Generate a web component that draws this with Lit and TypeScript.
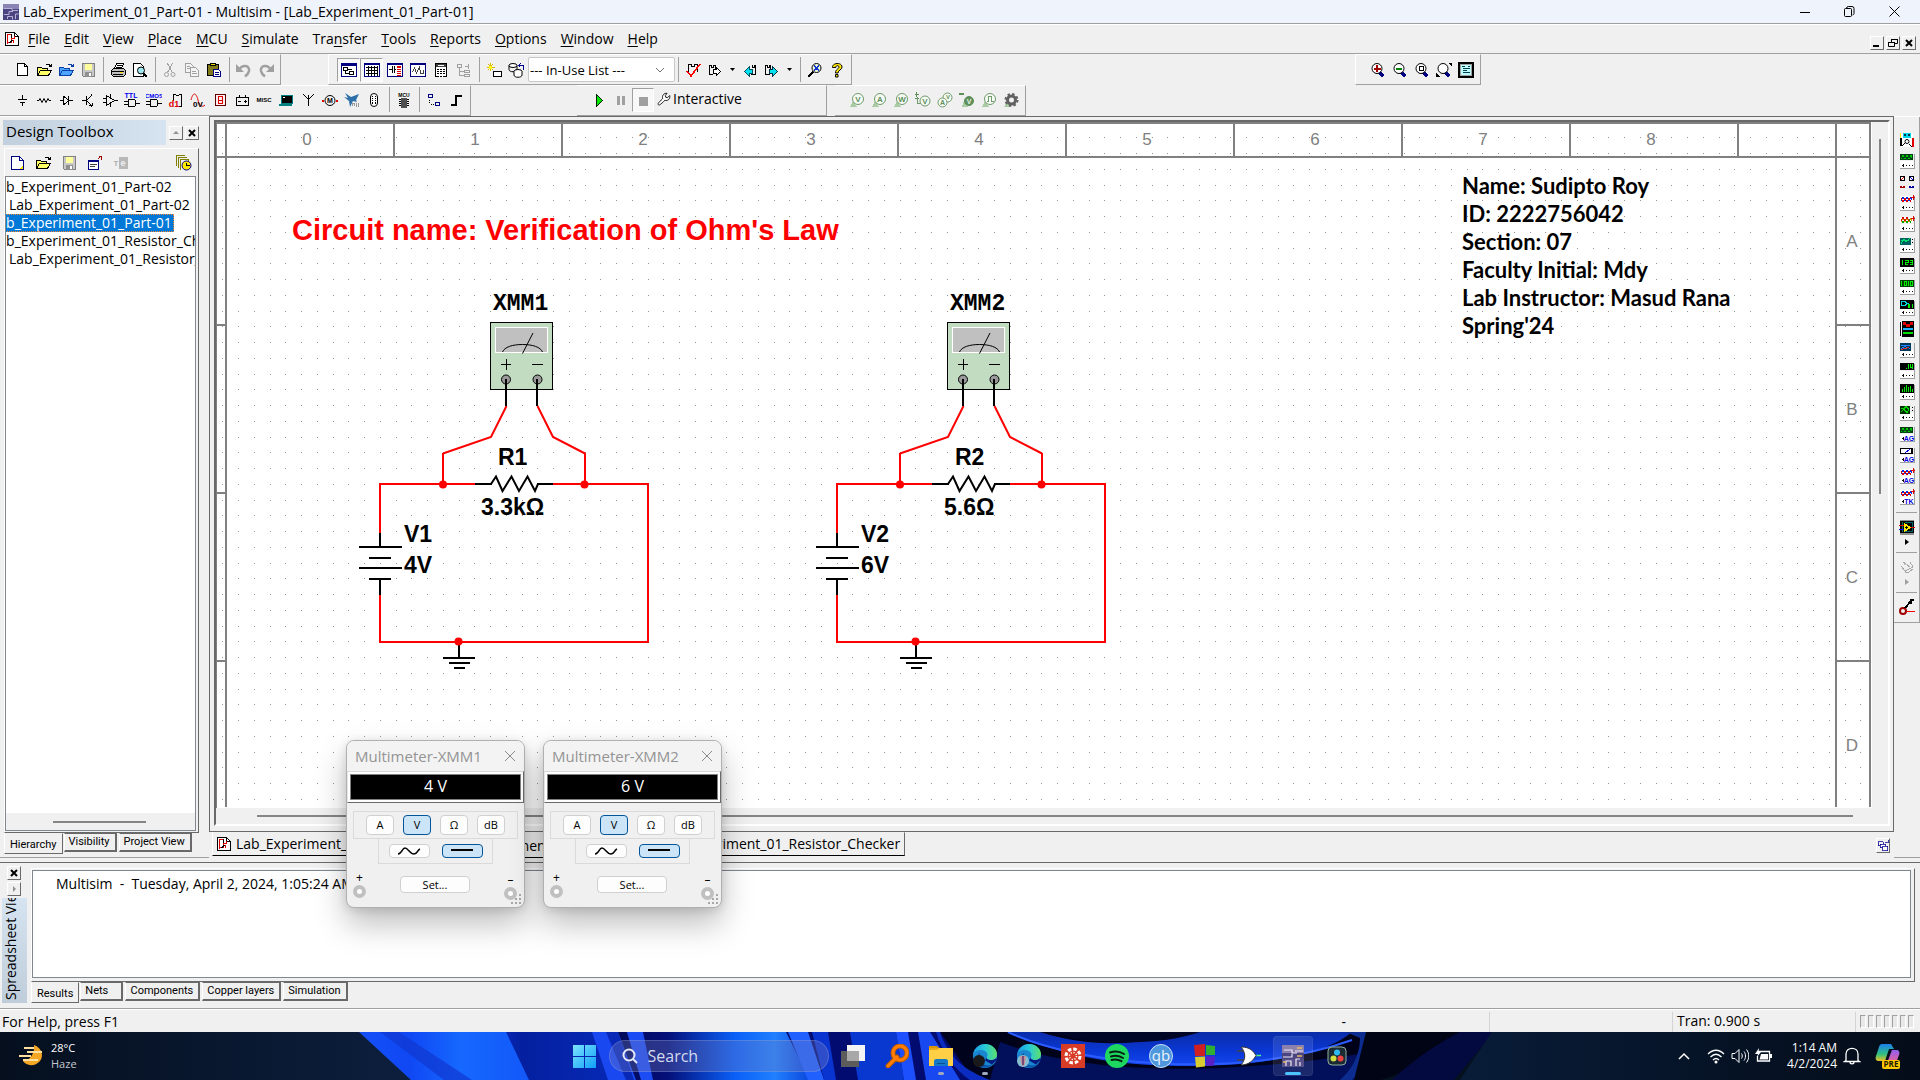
import { LitElement, html, svg, css } from "lit";
import { customElement, property, state } from "lit/decorators.js";
import { classMap } from "lit/directives/class-map.js";

/* ---------- drawing helpers ---------- */
const P = (d: string, s = "#000", f = "none", w = 1) =>
  svg`<path d=${d} stroke=${s} fill=${f} stroke-width=${w}></path>`;
const F = (d: string, f = "#000") => svg`<path d=${d} fill=${f}></path>`;
const C = (x: number, y: number, r: number, s = "#000", f = "none", w = 1) =>
  svg`<circle cx=${x} cy=${y} r=${r} stroke=${s} fill=${f} stroke-width=${w} shape-rendering="auto"></circle>`;
const T = (x: number, y: number, size: number, fill: string, t: string) =>
  svg`<text x=${x} y=${y} font-size=${size} font-weight="700" fill=${fill} text-anchor="middle" font-family="Liberation Sans, sans-serif">${t}</text>`;

const folder = (fill: string, line: string) => [
  P("M1.5 13.5v-8h4l1 1h5v2", line, fill),
  P("M1.5 13.5l3-5h11l-3 5z", line, fill),
  P("M9.5 3.5l1-1h3l1 2M12.5 4.5h2.5v-3", line),
];
const floppy = [
  P("M2.5 1.5h12v13h-11l-1-1z", "#808080", "#c8c8c8"),
  F("M5 2h7v6h-7z", "#ffff9c"),
  F("M5 10h7v5h-7z", "#909090"),
  F("M9 11h2v3h-2z", "#fff"),
];
const probe = (t: string, extra: any = null) => [
  F("M1 15h7l-4-6z", "#a9cba4"),
  C(9, 7, 5.5, "#6f9a6a", "#f6fbf6", 1),
  T(9, 10, 8, "#5f8f5a", t),
  extra,
];
const lens = (inner: any) => [
  P("M9.5 10.5l4 4", "#000080", "none", 3),
  C(7, 6.5, 5, "#000", "#fff", 1),
  inner,
];

const icons: Record<string, any> = {
  newdoc: [P("M3.5 1.5h7l3 3v9h-10z", "#000", "#fff"), P("M10.5 1.5v3h3")],
  newyellow: [P("M2.5 1.5h8l4 4v9h-12z", "#000080", "#fff"), F("M10 14h4v-4z", "#ffe400"), P("M10.5 1.5v4h4", "#000080")],
  open: folder("#ffff66", "#000"),
  openblue: folder("#4ca6ff", "#0b3fa8"),
  save: floppy,
  print: [P("M4.5 6.5l2-5h7l-2 5", "#000", "#fff"), P("M7 3.5h5M6 5.5h5"), P("M1.5 8.5l2-2h10l2 2v4l-2 2h-10l-2-2z", "#000", "#c0c0c0"), P("M2 9.5h12M3 12.5h10"), F("M10 10h3v1h-3z", "#ffe400")],
  preview: [P("M1.5 14.5v-13h7l3 3v10z", "#000", "#fff"), C(9, 8.5, 3.5, "#000", "#9fe8f0"), P("M11.5 11.5l3.5 3.5", "#000", "none", 2)],
  cut: [P("M5.5 1.5l5 9M10.5 1.5l-5 9", "#a0a0a0"), C(4.5, 12.5, 2, "#a0a0a0"), C(11, 12.5, 2, "#a0a0a0")],
  copy: [P("M1.5 1.5h5l3 3v6h-8z", "#a0a0a0", "#f4f4f4"), P("M6.5 5.5h5l3 3v6h-8z", "#a0a0a0", "#f4f4f4"), P("M8 9.5h4M8 11.5h5M3 4.5h3M3 6.5h3", "#a0a0a0")],
  paste: [P("M1.5 2.5h11v11h-11z", "#000", "#807a1c"), P("M4.5 3.5h5v-2h-5z", "#000", "#e8d800"), P("M7.5 7.5h5l2 2v5h-7z", "#000080", "#fff"), P("M9 10.5h4M9 12.5h4", "#000080")],
  undo: svg`<g shape-rendering="auto"><path d="M3 8C6 2 14 3 13 9c-.5 2.500-2 4-4 5.500" fill="none" stroke="#a0a0a0" stroke-width="2.500"></path><path d="M0 2v8h8z" fill="#a0a0a0"></path></g>`,
  redo: svg`<g shape-rendering="auto"><path d="M13 8C10 2 2 3 3 9c.5 2.500 2 4 4 5.500" fill="none" stroke="#a0a0a0" stroke-width="2.500"></path><path d="M16 2v8h-8z" fill="#a0a0a0"></path></g>`,
  toolboxview: [P("M.5 1.5h15v13h-15z", "#000080", "#fff"), F("M0 1h16v3h-16z", "#000080"), P("M2.5 5.5h4v3h-4zM8.5 9.5h4v3h-4zM4.5 9v2.5h4M7 7.5h4")],
  sheetview: [P("M.5 1.5h15v13h-15z", "#000080", "#fff"), F("M0 1h16v2h-16z", "#000080"), P("M2 5.5h12M2 8.5h12M2 11.5h12M4.5 4v10M7.5 4v10M10.5 4v10M13.5 4v10")],
  spiceview: [P("M.5 1.5h15v13h-15z", "#000080", "#fff"), F("M0 1h16v2h-16z", "#000080"), P("M2 7.5h3M7 7.5h2M5.5 4v7M7.5 4v7"), F("M10 4h4v10h-4z", "#e00000"), P("M10 6.5h4M10 8.5h4M10 10.5h4M10 12.5h4", "#fff")],
  grapher: [P("M.5 1.5h15v13h-15z", "#000080", "#fff"), F("M0 1h16v2h-16z", "#000080"), P("M2.5 10l2-4 2 5 3-6 1 6h3v-3", "#404040")],
  postproc: [P("M2.5 1.5h11v13h-11z", "#000", "#fff"), F("M3 2h10v3h-10z", "#404040"), P("M4 7.5h8M4 9.5h8M4 11.5h8", "#000", "none"), P("M6.5 6v9M9.5 6v9", "#fff"), F("M5 3h6v1h-6z", "#fff")],
  parent: [P("M1.5 2.5h4v3h-4zM8.5 8.5h5v2h-5zM8.5 12.5h5v2h-5zM3.5 6v7.5h5M3.5 9.5h5M9 4.5h4M12 2v5", "#a0a0a0")],
  wizard: [P("M7.5 9.5h8v5h-8z", "#000", "#fff"), P("M4.5 1v8M1 5.5h8M2 2l5 6M7 2l-5 6", "#d8b800"), F("M3 4h3v3h-3z", "#ff0")],
  database: [svg`<g shape-rendering="auto"><ellipse cx="5" cy="3.500" rx="4" ry="2" fill="#fff" stroke="#000"></ellipse><path d="M1 3.500v4c0 3 8 3 8 0v-4" fill="none" stroke="#000"></path><ellipse cx="10" cy="9.500" rx="4" ry="2" fill="#fff" stroke="#000"></ellipse><path d="M6 9.500v3.500c0 3 8 3 8 0v-3.500" fill="#fff" stroke="#000"></path></g>`, P("M11 3.5h4v4M12.5 1.5l-2 2 2 2", "#000090")],
  erc: [P("M3.5 11v-8.500h3v2h3v-2h3v7", "#000"), P("M2 9l4 5 9-12", "#f00", "none", 1.500)],
  fwdanno: [P("M5.5 12.5h-3v-9h2v2h2v-2h2v3", "#000"), P("M6.5 7.5h3v-2l4 4-4 4v-2h-3z", "#000", "#fff")],
  backanno: [P("M9.5 3.5h1v2h2v-2h1v9h-5", "#000"), P("M10.500 7.5h-3v-3l-5 5 5 5v-3h3z", "#005060", "#00e0f0")],
  fwdanno2: [P("M5.500 12.500h-4v-9h2v2h2v-2h1v4"), P("M5.5 7.5h3v-3l5 5-5 5v-3h-3z", "#003040", "#00e0f0")],
  find: [P("M1 15l5-5", "#000", "none", 2), C(9.5, 6, 4.5, "#000", "#e6f6d8"), P("M7 3.5l5 5M7 8.5l5-5", "#1030d0"), F("M8 5h3v3h-3z", "#1030d0")],
  help: svg`<path shape-rendering="auto" d="M3.500 5.500c-.5-5 9.500-5.500 9.500-.5 0 3-4 3-4 6H6.500c0-4 3.500-4 3.500-6 0-1.800-3.500-1.800-3.200.5zM6.500 12.500h2.500v2.500H6.500z" fill="#ffe800" stroke="#000"></path>`,
  zoomin: lens(F("M6 3h2v2.500h2.500v2h-2.500v2.500h-2v-2.500h-2.500v-2h2.500z", "#a00000")),
  zoomout: lens(F("M4 5.500h6v2h-6z", "#008000")),
  zoomarea: lens(P("M5 4.5h4v4h-4z")),
  zoomfit: [lens(null), F("M12 1h4v4zM0 11v4h4z")],
  fullscreen: [P("M1 1h14v14h-14z", "#000", "#a0a0a0", 2), F("M3 3h10v10h-10z", "#bff"), P("M4 4.5h3M5 6.5h7M5 8.5h4M5 10.5h7M10 4.5h2", "#004050")],
  source: [P("M8.5 3v4M4 7.5h9M6 10.5h5M8.5 11v3")],
  resistor: [svg`<path shape-rendering="auto" d="M1 8.500h2l1-2 2 4 2-4 2 4 2-4 1 2h2" fill="none" stroke="#000"></path>`],
  diode: [P("M2 8.5h3M11 8.5h4M5.5 4v9M10.5 4v9M5.5 4l5 4.5-5 4.5")],
  transistor: [P("M2 8.5h4M6.5 4v9M7 8l4-4M7 9l4 4M11.5 2v2M11.5 13v2M9 13h3v-2")],
  opamp: [P("M4.5 3.5v10l8-5zM1 6.5h3M1 10.5h3M12 8.5h4M8.5 2v3M8.5 12v3")],
  ttl: [T(7, 6, 7, "#0000f0", "TTL"), P("M4 7.5h5c4 0 4 7 0 7h-5zM0 9.5h4M0 12.5h4M12 11.5h4")],
  cmos: [T(8, 6, 6, "#0000f0", "CMOS"), P("M4 7.5h5c4 0 4 7 0 7h-5zM0 9.5h4M0 12.5h4M12 11.5h4")],
  miscdig: [P("M5.5 9v-6.500h2l1 1h2l1-1h2v12h-3"), T(6, 15, 9, "#e00000", "d1")],
  mixed: [svg`<path d="M1 8c2-8 5-8 7 0 1 5 4 8 7 5" fill="none" stroke="#e00000" shape-rendering="auto"></path>`, T(8, 15, 8, "#000", "0V")],
  indicator: [P("M3.5 2.5h10v11h-10z", "#600000", "#ffecec"), P("M6.5 4.5h4v7h-4zM6.5 8.5h4", "#e00000")],
  power: [P("M2.5 5.5h12v8h-12zM5.5 3v2M11.5 3v2M4 9.5h3M10 9.5h3M11.5 8v3")],
  miscpart: [T(8, 10, 6, "#000", "MISC")],
  advperiph: [P("M3.5 3.5h11v8h-11z", "#008080", "#000"), F("M5 5h2v1h-2z", "#fff"), F("M1 12h13v2h-13z", "#008080")],
  rf: [P("M3.5 2.5l5 5 5-5M8.5 3v11")],
  motor: [P("M0 8.5h2M14 8.5h2", "#e00000", "none", 2), C(8, 8.5, 5), T(8, 11, 7, "#000", "M")],
  ni: [svg`<path shape-rendering="auto" d="M1 1l6 4 8-3-3 6 1 2-4-1-3 6-1-6-5-4 4 1z" fill="#2d6fa8"></path>`, P("M8.5 14v-3h2v3M12.5 11v4M14.5 11v4", "#999")],
  connector: [svg`<rect x="4.500" y="1.500" width="7" height="13" rx="3.500" fill="#fff" stroke="#000" shape-rendering="auto"></rect>`, P("M6.5 4v8M9.5 4v8", "#000", "none"), P("M6 5.5h4M6 7.500h4M6 9.5h4", "#fff")],
  mcu: [T(8, 5, 5, "#000", "MCU"), P("M3 7.5h10M3 9.5h10M3 11.5h10M3 13.5h10"), F("M5 6h6v10h-6z", "#505050")],
  hier: [P("M2.5 2.5h4v3h-4z", "#000080"), P("M9.5 10.5h4v3h-4z", "#000080"), P("M3 8.5h1M3 10.5h1M5 12.5h1M7 12.5h1")],
  bus: [P("M3 13h5v-9h6", "#000", "none", 2)],
  play: [P("M5.5 2.5l6 6-6 6z", "#002000", "#00e800")],
  pause: [F("M4 4h3v9h-3zM9 4h3v9h-3z", "#a0a0a0")],
  stop: [F("M4 5h9v9h-9z", "#a0a0a0")],
  wrench: svg`<path shape-rendering="auto" d="M1.500 14.500c-1-1 0-2 5-7C5.500 4 8 1 11.500 1.500L9.500 4l.5 2 2 .5 2.500-2.500C15.500 8 12 10.500 9 9.500 4 14.500 2.500 15.500 1.500 14.500z" fill="#fff" stroke="#000"></path>`,
  pv: probe("V"), pa: probe("A"), pw: probe("W"),
  pdiff: [F("M1 0h1v2h2v1h-2v2h-1v-2h-2v-1h2zM0 6h4v1h-4z", "#5f8f5a"), P("M2 5v6h4", "#6f9a6a"), C(10, 9, 5, "#6f9a6a", "#f6fbf6"), T(10, 12, 8, "#5f8f5a", "V")],
  pva: [C(10.5, 5.5, 4.5, "#6f9a6a", "#f6fbf6"), T(11, 7, 6, "#5f8f5a", "V"), C(5.5, 10.5, 4.5, "#6f9a6a", "#f6fbf6"), T(5.5, 13, 7, "#5f8f5a", "A")],
  pref: [F("M0 1h5v2h-5z", "#5f8f5a"), F("M3 15h6l-4-6z", "#a9cba4"), C(10, 9, 4.5, "#5f8f5a", "#5f8f5a"), T(10, 12, 7, "#e8f4e8", "V")],
  pdig: [F("M1 15h7l-4-6z", "#a9cba4"), C(9, 7, 5.5, "#6f9a6a", "#f6fbf6"), P("M5.5 9.5h2v-5h3v5h2", "#6f9a6a")],
  psettings: svg`<g shape-rendering="auto"><path d="M1 15h6l-3-5z" fill="#a9cba4"></path><circle cx="8.500" cy="8" r="4" fill="none" stroke="#606060" stroke-width="3"></circle><circle cx="8.500" cy="8" r="6" fill="none" stroke="#606060" stroke-width="2" stroke-dasharray="2.400 2.300"></circle></g>`,
  sheet: [P("M1.5 1.5h9l4 4v9h-13z", "#000", "#fff"), P("M10.5 1.5v4h4"), P("M3.5 3v10M3 3.5h4v8h-4M7 7.5h3v-3M9.5 12v-3", "#e00000"), P("M7.5 3v4M5.5 12l3-3")],
  closeproj: [P("M1.5 5.5h10v9h-10z", "#000080", "#fff"), F("M1 5h10v2h-10z", "#000080"), P("M3 9.500h7M3 11.5h5", "#404040"), P("M11 4l3-3M11.500 1.5h3v3", "#a00000")],
  rename: [F("M6 2h9v12h-9z", "#b8b8b8"), T(3, 11, 8, "#b0b0b0", "T"), T(10, 11, 9, "#f0f0f0", "e")],
  versions: [P("M.5 10.5v-10h8M2.5 12.5v-10h8M4.5 14.5v-10h8v3", "#808000"), C(10.5, 10.5, 4.5, "#000080", "#ffe800"), P("M10.5 7.5v3h3", "#000")],
  cascade: [P("M1.5 2.5h7v5h-7z", "#000090"), P("M4.5 5.5h7v5h-7z", "#000090", "#fff"), P("M7.5 8.5h7v6h-7z", "#000090", "#fff"), P("M11 3.5h4v-3", "#000090")],
  component: [P("M1 1.5h14M1 14.5h14", "#909090", "none", 2), F("M1 2h14v12h-14z"), P("M3.5 3v10M13.5 3v10M6 3.5h7M6 12.5h7", "#006868"), F("M5 4l8 4.500-8 4.500z", "#ffe800"), P("M0 6.5h5M12 8.5h4", "#e00000"), P("M0 10.5h5", "#0000e0"), P("M6 8.5h3M7.5 7v3")],
  tester: [P("M2 7l4 5 8-4-3-5M4 3l7 5M6 11v2h4l4-3", "#a8a8a8"), P("M5 6l4-1", "#c8c8c8")],
  probeclamp: [C(4, 12, 3, "#a00000", "none", 2), P("M6 9l6-7M10 3l3 1M12 4v-3h3", "#000", "none", 2), P("M8 12.5h8", "#f00")],
};

const icon = (name: string, w = 16) =>
  html`<svg class="ic" width=${w} height=${w} viewBox="0 0 16 16" shape-rendering="crispEdges" aria-hidden="true">${icons[name]}</svg>`;

/* Instrument buttons: screen drawing over a terminal strip */
const term = (extra: any = null) => [
  F("M1 8h14v8h-14z", "#fff"), P("M1 15.5h14.5v-15", "#a0a0a0"),
  P("M3 12.5h2M7 12.5h1M10 12.5h1M13 12.5h1M4 11.5h1M4 13.5h1", "#101010"), extra,
];
const wave = (bg: string, a: string, b: string) => [F("M1 1h13v6h-13z", bg), P("M2 5.5l2-3 2 3 2-3 2 3 2-3 1 2", a), P("M2 3.5l2 3 2-3 2 3 2-3 2 3", b)];
const redPlus = P("M14.5 0v5M12 2.5h4", "#e00000");
const instruments: [string, any][] = [
  ["Multimeter", [F("M2 2h12v13h-12z", "#fff"), F("M4 1h8v5h-8z", "#00d8e8"), F("M5 2h2v2h-2zM9 2h2v2h-2z", "#003050"), F("M1 1h1v13h-1z", "#ffe800"), F("M1 6h2v8h-2z"), F("M13 6h2v9h-2z", "#e00000"), C(8, 9.5, 2), P("M3 14l3-3M10 12l3 3")]],
  ["Function generator", [term(), wave("#003c10", "#00c800", "#00501c")]],
  ["Wattmeter", [P("M1.5 2.5h4v4h-4zM10.5 2.5h4v4h-4z", "#000", "#fff"), P("M2 6l3-3", "#e00000"), P("M11 3l3 3", "#0000e0"), P("M1 12.5h5", "#a00000", "none", 2), P("M10 12.5h5", "#0000a0", "none", 2), F("M3 12h1v1h-1zM12 12h1v1h-1z", "#fff")]],
  ["Oscilloscope", [term(), wave("#fff", "#0030e0", "#e00000"), redPlus]],
  ["Four channel oscilloscope", [term(), wave("#fff", "#c8a000", "#00a000"), P("M2 4.5l2-3 2 3 2-3 2 3", "#e00000"), redPlus]],
  ["Bode plotter", [term(), F("M1 1h11v7h-11z", "#006060"), P("M2 6.5l3-4 2 2 4-3M2 3.5h8", "#00e070"), F("M13 2h1v1h-1zM13 5h1v1h-1z")]],
  ["Frequency counter", [term(), F("M1 0h14v9h-14z"), P("M3.5 2v5M6 2.5h3v2h-3v2h3M11 2.5h2v4h-2M11 4.5h2", "#00f000")]],
  ["Word generator", [term(), F("M1 1h14v7h-14z", "#004000"), P("M2.5 2v5M5 2.5h2v4h-2zM9.5 2v5M11.5 2.5h2v4h-2z", "#00f000")]],
  ["Logic converter", [term(), F("M1 0h14v9h-14z"), P("M2 1.5h3c3 0 3 4 0 4h-3zM7 3.5h3", "#00d8e8"), F("M9 4h2v4h-2zM13 4h1v4h-1z", "#00f000")]],
  ["Logic analyzer", [F("M3 0h12v16h-12z"), P("M1.5 1v14", "#000"), F("M4 1h3v2h4v-2h3v3h-10z", "#e00000"), F("M4 7h10v2h-10z", "#20b0ff"), F("M4 11h10v2h-10z", "#00e000"), F("M7 4h4v2h-4z", "#e00000")]],
  ["IV analyzer", [term(), F("M1 1h11v8h-11z", "#003858"), P("M2 3.5h9M2 6.5l4-2 5 2", "#2080ff"), P("M2 7.5l8-2", "#e03030")]],
  ["Distortion analyzer", [term(), F("M1 0h14v7h-14z"), P("M7 5.5h1M9.5 1v5M11.5 1v3h2M13.5 1v5", "#00f000")]],
  ["Spectrum analyzer", [term(), F("M1 0h14v9h-14z"), P("M3.5 5v3M5.5 3v5M7.5 1v7M9.5 3v5M11.5 2v6M13.5 5v3", "#00f000")]],
  ["Network analyzer", [term(), F("M1 1h10v8h-10z", "#003000"), P("M2 3.5h3l2-2 3 3M2 6.5l3-2 3 3 2-3", "#00d800"), F("M13 2h1v1h-1zM13 5h1v1h-1z")]],
  ["Agilent function generator", [term(F("M5 9h9v6h-9z", "#fff")), wave("#003c10", "#00c800", "#00501c"), T(10, 15, 7, "#0000e0", "AG")]],
  ["Agilent multimeter", [term(F("M5 9h9v6h-9z", "#fff")), P("M1.5 1.5h11v5h-11z", "#000", "#fff"), P("M6 6l5-4", "#0000e0"), F("M13 1h1v6h-1z"), T(10, 15, 7, "#0000e0", "AG")]],
  ["Agilent oscilloscope", [term(F("M5 9h9v6h-9z", "#fff")), wave("#fff", "#0030e0", "#e00000"), redPlus, T(10, 15, 7, "#0000e0", "AG")]],
  ["Tektronix oscilloscope", [term(F("M5 9h9v6h-9z", "#fff")), wave("#fff", "#0030e0", "#e00000"), redPlus, T(10, 15, 7, "#0000e0", "TK")]],
];

const ui = css`
  :host { font-family: "Open Sans", "Noto Sans", sans-serif; color: #000; }
  * { box-sizing: border-box; }
  button { font: inherit; color: inherit; background: none; border: 0; padding: 0; margin: 0; display: flex; align-items: center; justify-content: center; }
  svg { display: block; flex: none; }
`;

/* ---------- schematic sheet ---------- */
interface Circuit { dx: number; meter: string; r: string; rv: string; rvx: number; v: string; vv: string; }
const circuits: Circuit[] = [
  { dx: -457, meter: "XMM1", r: "R1", rv: "3.3kΩ", rvx: 938, v: "V1", vv: "4V" },
  { dx: 0, meter: "XMM2", r: "R2", rv: "5.6Ω", rvx: 944, v: "V2", vv: "6V" },
];
const notes = ["Name: Sudipto Roy", "ID: 2222756042", "Section: 07", "Faculty Initial: Mdy", "Lab Instructor: Masud Rana", "Spring'24"];

@customElement("schematic-sheet")
export class SchematicSheet extends LitElement {
  static styles = css`
    :host { display: block; overflow: hidden; background: #fff; min-width: 0; min-height: 0; }
    svg { display: block; }
    .frame { stroke: #808080; stroke-width: 2; fill: none; }
    .zone { font: 17px "Liberation Sans", sans-serif; fill: #808080; text-anchor: middle; }
    .title { font: bold 29px "Liberation Sans", sans-serif; fill: #f00; }
    .note { font: bold 22px Lato, sans-serif; }
    .lbl { font: bold 23px "Liberation Sans", sans-serif; }
    .mono { font: bold 23px "Liberation Mono", monospace; }
    .wire { stroke: #f00; stroke-width: 2; fill: none; }
    .pin { stroke: #000; stroke-width: 2; fill: none; }
    .thin { stroke: #000; stroke-width: 1; fill: none; }
    .node { fill: #f00; }
  `;
  private dots() {
    let d = "";
    for (let j = 0; j < 43; j++) {
      const y = Math.floor(137.75 + j * 15.75);
      for (let i = 0; i < 105; i++) d += `M${Math.floor(222.75 + i * 15.75)} ${y}.5h1`;
    }
    return d;
  }
  private circuit(c: Circuit) {
    return svg`<g transform=${`translate(${c.dx} 0)`}>
      <g shape-rendering="crispEdges">
        <path class="wire" d="M900 453V484M1042 453V484M932 484H837V533M1010 484H1105V642H837V595"></path>
        <path class="pin" d="M837 533V547M816 547H859M826 558H848M816 568H859M826 579H848M837 579V595M932 484H949M994 484H1010M916 642V658M900 658H932M906 663H927M911 668H922"></path>
      </g>
      <path class="wire" d="M963.500 406L948 437L900 453.500M994.500 406L1010 437L1042 453.500"></path>
      <path class="pin" d="M948 484L953 476.500L959.500 491L968.500 476.500L976 491L984.500 476.500L992 491L995 484"></path>
      <circle class="node" cx="900" cy="484.500" r="4"></circle>
      <circle class="node" cx="1041.500" cy="484.500" r="4"></circle>
      <circle class="node" cx="915.500" cy="641.500" r="4"></circle>
      <rect x="947.500" y="322.500" width="62" height="67" fill="#c1dcc1" stroke="#000"></rect>
      <rect x="952.500" y="327.500" width="52" height="25" fill="#c0c0c0" stroke="#fff"></rect>
      <path class="thin" d="M959.500 352c2-5 10-7.500 20-7.500s18 2.500 20 7.500M979.500 353.500L990 333M958 364.500h10M963.500 359v11M989 364.500h11"></path>
      <circle cx="963" cy="379.500" r="4.500" fill="#999" stroke="#000"></circle>
      <circle cx="994.500" cy="379.500" r="4.500" fill="#999" stroke="#000"></circle>
      <path class="pin" d="M963 379V406M994 379V406" shape-rendering="crispEdges"></path>
      <text class="mono" x="950" y="310">${c.meter}</text>
      <text class="lbl" x="955" y="465">${c.r}</text>
      <text class="lbl" x=${c.rvx} y="515">${c.rv}</text>
      <text class="lbl" x="861" y="542">${c.v}</text>
      <text class="lbl" x="861" y="573">${c.vv}</text>
    </g>`;
  }
  render() {
    const cols = [0, 1, 2, 3, 4, 5, 6, 7, 8];
    return html`<svg width="1656" height="686" role="img" aria-label="Verification of Ohm's Law schematic">
      <g transform="translate(-216 -122)">
        <path d=${this.dots()} stroke="#959595" shape-rendering="crispEdges"></path>
        <g shape-rendering="crispEdges">
          <path class="frame" d="M216 810V123H1870V807M226 122V807M1836 122V807M216 157H1870"></path>
          ${cols.map((n) => svg`<path class="frame" d=${`M${394 + 168 * n} 122V157`}></path>`)}
          ${[325, 493, 661].map((y) => svg`<path class="frame" d=${`M216 ${y}H226M1836 ${y}H1870`}></path>`)}
        </g>
        ${cols.map((n) => svg`<text class="zone" x=${307 + 168 * n} y="145">${n}</text>`)}
        ${["A", "B", "C", "D"].map((t, i) => svg`<text class="zone" x="1852" y=${247 + 168 * i}>${t}</text>`)}
        <text class="title" x="292" y="240">Circuit name: Verification of Ohm's Law</text>
        ${notes.map((t, i) => svg`<text class="note" x="1462" y=${194 + 28 * i}>${t}</text>`)}
        ${circuits.map((c) => this.circuit(c))}
      </g>
    </svg>`;
  }
}

/* ---------- multimeter window ---------- */
@customElement("multimeter-window")
export class MultimeterWindow extends LitElement {
  @property() name = "";
  @property() reading = "";
  @state() private mode = "V";
  static styles = [ui, css`
    :host { display: flex; flex-direction: column; width: 179px; height: 168px; background: #f0f0f0; border: 1px solid #b0b0b0; border-radius: 8px; overflow: hidden; box-shadow: 0 16px 32px rgba(0, 0, 0, .26), 0 2px 10px rgba(0, 0, 0, .12); }
    .bar { display: flex; align-items: center; justify-content: space-between; height: 30px; padding: 0 8px; font-size: 15px; color: #949494; background: #f3f3f3; }
    .lcd { border: 1px solid; border-color: #d8d8d8 #696969 #696969 #e4e4e4; height: 32px; padding: 2px; background: #fff; }
    .lcd output { display: block; height: 100%; border: 1px solid #808080; background: #000; color: #fff; text-align: center; font-size: 16px; line-height: 22px; }
    .box { border: 1px solid #dadada; display: flex; justify-content: center; align-items: center; }
    .one { margin: 8px 6px 0; height: 28px; gap: 9px; }
    .two { margin: 0 31px; height: 25px; gap: 12px; border-top: 0; }
    .b { height: 20px; width: 28px; background: #fdfdfd; border: 1px solid #d0d0d0; border-radius: 4px; font-size: 11px; }
    .two .b { width: 41px; height: 14px; }
    .on { background: #cce4f7; border-color: #005499; }
    .foot { display: flex; justify-content: space-between; padding: 8px 7px 0 6px; }
    .set { width: 70px; height: 17px; margin-top: 4px; font-size: 11px; }
    .t { display: flex; flex-direction: column; align-items: center; font-size: 12px; line-height: 12px; }
    .neg { margin-top: 2px; }
    .ring { width: 13px; height: 13px; border-radius: 50%; border: 4px solid #c0c0c0; background: #fff; margin-top: 1px; }
    .grip { position: absolute; right: 1px; bottom: 1px; }
  `];
  render() {
    return html`
      <div class="bar"><span>Multimeter-${this.name}</span>
        <button aria-label="Close"><svg width="12" height="12"><path d="M1 1l10 10M11 1L1 11" stroke="#8a8a8a"></path></svg></button></div>
      <div class="lcd"><output>${this.reading}</output></div>
      <div class="box one">${["A", "V", "Ω", "dB"].map((m) => html`<button class=${classMap({ b: true, on: this.mode === m })} @click=${() => (this.mode = m)}>${m}</button>`)}</div>
      <div class="box two">
        <button class="b" aria-label="AC"><svg width="24" height="10"><path d="M1 8c4 0 4-6 7-6s5 6 9 6 3-4 6-5" stroke="#000" stroke-width="1.500" fill="none"></path></svg></button>
        <button class="b on" aria-label="DC"><svg width="22" height="4"><path d="M0 1h22" stroke="#000" stroke-width="2"></path></svg></button>
      </div>
      <div class="foot">
        <div class="t"><span>+</span><i class="ring"></i></div>
        <button class="b set">Set...</button>
        <div class="t neg"><span>–</span><i class="ring"></i></div>
      </div>
      <svg class="grip" width="12" height="12"><path d="M8 1h2M4 5h2M8 5h2M0 9h2M4 9h2M8 9h2" stroke="#a8a8a8" stroke-width="2"></path></svg>`;
  }
}

/* ---------- taskbar ---------- */
const edge = (badge: any) => svg`<circle cx="12" cy="12" r="12" fill="#1a86d0"></circle><path d="M0 11C1 3 8 0 12 0c7 0 12 5 12 10 0 4-3 6-6 6-3 0-5-1-4-3 2-4-2-7-6-7-4 0-7 2-8 5z" fill="url(#eg)"></path><path d="M14 13c-1 2 1 3 4 3 2 0 3-.5 5-1.500l1 1-5 5-7-4z" fill="#041a80"></path><path d="M7 12c0 7 6 12 13 8-5 6-16 4-17-4 0-3 2-6 4-7z" fill="#0a55a8"></path>${badge}`;
const apps: { n: string; d: any; state?: string }[] = [
  { n: "Task view", d: svg`<path d="M6 1h18v16h-18z" fill="#f4f4f4"></path><path d="M0 7h18v16h-18z" fill="#5c5c5c"></path><path d="M6 7h12v10h-12z" fill="#a8a8a8"></path>` },
  { n: "Everything", d: svg`<path d="M12 13L3 22" stroke="#b85c00" stroke-width="5" stroke-linecap="round"></path><circle cx="15" cy="9" r="7" fill="none" stroke="#b85c00" stroke-width="5"></circle><path d="M12 13L3 22" stroke="#ff7d00" stroke-width="3" stroke-linecap="round"></path><circle cx="15" cy="9" r="7" fill="none" stroke="#ff7d00" stroke-width="3"></circle>` },
  { n: "File Explorer", state: "run", d: svg`<path d="M0 2h8l2 2v4h-10z" fill="#d99400"></path><path d="M0 4h24v18h-24z" fill="#ffcf45"></path><path d="M0 6h8l3-2h-11z" fill="#e9a81a"></path><path d="M5 22v-5c0-1 1-2 2-2h10c1 0 2 1 2 2v5z" fill="#1379c8"></path><path d="M8 19h8v1h-8z" fill="#0a4f90"></path>` },
  { n: "Edge", state: "run", d: edge(svg`<circle cx="6" cy="17" r="6" fill="#1a1a1a"></circle>`) },
  { n: "Edge profile", d: edge(svg`<circle cx="6" cy="17" r="6" fill="#88bcd0"></circle><path d="M3 12h6l-1 7-2 4-2-4z" fill="#c09098"></path><path d="M5 12h2v9h-2z" fill="#7a4878"></path>`) },
  { n: "Canvas", d: svg`<path d="M0 0h24v24h-24z" fill="#d83b26"></path><circle cx="12" cy="12" r="7" fill="none" stroke="#fff" stroke-width="3" stroke-dasharray="3.600 1.900"></circle><circle cx="12" cy="12" r="3.500" fill="none" stroke="#fff" stroke-width="1.500" stroke-dasharray="1.200 1.550"></circle>` },
  { n: "Spotify", d: svg`<circle cx="12" cy="12" r="12" fill="#1ed760"></circle><path d="M5 8.500c5-1.500 10-1 14 1.500M6 12.500c4-1.300 8-.8 12 1.500M6.500 16c4-1 7-.5 10 1.200" stroke="#062010" stroke-width="2" fill="none" stroke-linecap="round"></path>` },
  { n: "qBittorrent", d: svg`<circle cx="12" cy="12" r="11.500" fill="#4f97dc" stroke="#c8e0f8"></circle><text x="12" y="17" font-size="15" text-anchor="middle" fill="#eaf4ff" font-family="Open Sans, sans-serif">qb</text>` },
  { n: "CodeBlocks", d: svg`<path d="M1 1l11-1v12l-10 0z" fill="#d02020"></path><path d="M13 1l9 1v9h-9z" fill="#30b030"></path><path d="M2 13l10-.5v10l-9 1z" fill="#d8cc30"></path><path d="M13 12l9 .5-1 9-8 .5z" fill="#5a20c8"></path>` },
  { n: "Logic gate", d: svg`<path d="M0 7h7M0 16h7" stroke="#444" stroke-width="1.500"></path><path d="M17 11.500h7" stroke="#50f080" stroke-width="1.500"></path><path d="M4 3c5 0 11 1 15 8.500C15 19 9 21 4 21c5-6 5-12 0-18z" fill="#fff" stroke="#333"></path>` },
  { n: "Multisim", state: "active", d: svg`<path d="M1 1h22v22h-22z" fill="#56508a"></path><path d="M1 1h22v8h-22z" fill="#8c80ac"></path><path d="M1 9h22v6h-22z" fill="#4a4480"></path><path d="M3 6h8v3h5M14 7h8M2 13h9v-3M5 22v-5h5v5M15 22v-7h4M19 22v-4" stroke="#ece8f4" stroke-width="1.200" fill="none"></path><path d="M16 4h5M2 18h3M16 12h5" stroke="#e8b868" stroke-width="1.500"></path>` },
  { n: "DaVinci Resolve", d: svg`<rect x="3" y="3" width="18" height="18" rx="4" fill="#1b2a33" stroke="#8fb0a0"></rect><circle cx="12" cy="8.500" r="3" fill="#30b8f0"></circle><circle cx="8.500" cy="14.500" r="3" fill="#d0e040"></circle><circle cx="15.500" cy="14.500" r="3" fill="#f04040"></circle>` },
];

@customElement("task-bar")
export class TaskBar extends LitElement {
  static styles = [ui, css`
    :host { display: grid; grid-template-columns: 1fr auto 1fr; position: relative; height: 48px; background: #061120; color: #fff; overflow: hidden; font-size: 12px; }
    .wall { position: absolute; inset: 0; width: 100%; height: 100%; }
    .left, .mid, .right { position: relative; display: flex; align-items: center; }
    .weather { gap: 7px; margin-left: 18px; font-size: 11px; line-height: 16px; text-align: left; }
    .haze { color: #c4c8d0; }
    .app { width: 44px; height: 48px; flex-direction: column; position: relative; }
    .app.active::before { content: ""; position: absolute; inset: 4px 2px; border-radius: 4px; background: rgba(255, 255, 255, .1); border: 1px solid rgba(255, 255, 255, .06); }
    .app.run::after, .app.active::after { content: ""; position: absolute; bottom: 5px; left: 19px; width: 6px; height: 3px; border-radius: 2px; background: #a0a8c0; }
    .app.active::after { left: 14px; width: 16px; background: #4cc2ff; }
    .app svg { position: relative; }
    .search { display: flex; align-items: center; gap: 10px; width: 220px; height: 32px; margin: 0 2px 0 3px; padding: 0 12px; border-radius: 16px; background: rgba(120, 130, 190, .32); border: 1px solid rgba(160, 170, 220, .3); }
    .search input { width: 150px; border: 0; background: none; outline: 0; padding: 0; font: 16px "Open Sans", sans-serif; color: #fff; }
    .search input::placeholder { color: #d4daf0; opacity: 1; }
    .right { justify-content: flex-end; gap: 6px; padding-right: 19px; }
    .chev { margin-right: 11px; }
    .clock { flex-direction: column; align-items: flex-end; line-height: 16px; margin-left: 4px; min-width: 54px; text-align: right; }
    .bell { margin-right: 8px; }
  `];
  render() {
    return html`
      <svg class="wall" viewBox="0 0 1920 48" preserveAspectRatio="none" aria-hidden="true">
        <defs>
          <linearGradient id="b0"><stop offset="0" stop-color="#050f1e"></stop><stop offset="1" stop-color="#0c1f3e"></stop></linearGradient>
          <linearGradient id="b1"><stop offset="0" stop-color="#1450f8"></stop><stop offset=".3" stop-color="#1048f4"></stop><stop offset=".6" stop-color="#1668ff"></stop><stop offset="1" stop-color="#1258f8"></stop></linearGradient>
          <linearGradient id="b2"><stop offset="0" stop-color="#0828b8"></stop><stop offset=".2" stop-color="#0420a0"></stop><stop offset="1" stop-color="#0628b4"></stop></linearGradient>
          <linearGradient id="b3"><stop offset="0" stop-color="#000a58"></stop><stop offset=".25" stop-color="#040f78"></stop><stop offset=".6" stop-color="#0a60f8"></stop><stop offset=".8" stop-color="#2080ff"></stop><stop offset="1" stop-color="#0a40d8"></stop></linearGradient>
          <linearGradient id="b4" x2="0" y2="1"><stop offset="0" stop-color="#0a2ca8"></stop><stop offset=".6" stop-color="#0a38d8"></stop><stop offset="1" stop-color="#1448f0"></stop></linearGradient>
          <linearGradient id="b5"><stop offset="0" stop-color="#081c38"></stop><stop offset="1" stop-color="#040c18"></stop></linearGradient>
        </defs>
        <path d="M0 0h420v48H0z" fill="url(#b0)"></path>
        <path d="M500 0h96l16 48H526z" fill="url(#b2)"></path>
        <path d="M359 0H506L529 48H411z" fill="url(#b1)"></path>
        <path d="M380 0h19l73 48h-28z" fill="#1038d0" opacity=".7"></path>
        <path d="M592 0h30l26 48h-40z" fill="#1a48f0"></path>
        <path d="M606 0h12l16 48h-8z" fill="#0828b8"></path>
        <path d="M618 0h170l26 48H636z" fill="url(#b3)"></path>
        <path d="M627 0h16l10 48h-12z" fill="#1c4cf4"></path>
        <path d="M786 0h180l40 48H810z" fill="#020c70"></path>
        <path d="M788 0h20l16 48h-16z" fill="#2060ff"></path>
        <path d="M812 0h16l8 48h-12z" fill="#0a34d0"></path>
        <path d="M850 0h46l8 48h-46z" fill="#0838d0"></path>
        <path d="M896 0h12l8 48h-12z" fill="#1c50ff"></path>
        <path d="M918 0h12l30 48h-34z" fill="#1848f0"></path>
        <path d="M940 0h80l80 48h-126z" fill="#00031c"></path>
        <path d="M940 0C950 30 970 40 990 48h-20C955 38 942 20 936 0z" fill="#0a2cc0"></path>
        <path d="M1000 0h370v48H1000z" fill="#00021a"></path>
        <path d="M1000 10C1080 40 1200 46 1360 22V48H990z" fill="#02105c"></path>
        <path d="M1008 0C1070 28 1130 34 1190 34 1270 34 1330 20 1352 0H1180C1140 14 1090 16 1040 0z" fill="url(#b4)"></path>
        <path d="M1052 0H1200C1160 14 1090 14 1052 0z" fill="#010526"></path>
        <path d="M1008 0C1080 34 1240 48 1352 8" stroke="#2c5cff" stroke-width="2" fill="none"></path>
        <path d="M1340 48c16-14 20-30 20-42l-14-6h20c8 16-4 40-14 48z" fill="#0c2c90"></path>
        <path d="M1366 0H1460C1440 20 1400 44 1380 48h-26z" fill="#000414"></path>
        <path d="M1392 48C1410 30 1440 10 1460 0h34l-40 48z" fill="#020a40"></path>
        <path d="M1492 0H1920V48H1460z" fill="url(#b5)"></path>
      </svg>
      <div class="left"><button class="weather">
        <svg width="26" height="26" viewBox="0 0 26 26"><path d="M16 2c8 3 10 11 6 16-5 6-14 5-17 0 7 0 12-8 11-16z" fill="#f5a623"></path><path d="M6 5h10M9 9h15M1 13h12M5 17h15" stroke="#ffe0a0" stroke-width="2"></path></svg>
        <span>28°C<br /><span class="haze">Haze</span></span></button></div>
      <div class="mid">
        <button class="app" aria-label="Start"><svg width="24" height="24"><defs><linearGradient id="w" x2="1" y2="1"><stop offset="0" stop-color="#7ce4ff"></stop><stop offset="1" stop-color="#10a0f8"></stop></linearGradient></defs><path d="M1 1h11v11H1zM13 1h11v11H13zM1 13h11v11H1zM13 13h11v11H13z" fill="url(#w)"></path></svg></button>
        <label class="search"><svg width="16" height="16"><circle cx="7" cy="7" r="5.500" fill="none" stroke="#e4e8f8" stroke-width="2"></circle><path d="M11 11l4 4" stroke="#e4e8f8" stroke-width="2"></path></svg><input type="text" placeholder="Search" aria-label="Search" /></label>
        ${apps.map((a) => html`<button class="app ${a.state ?? ""}" aria-label=${a.n}><svg width="24" height="24"><defs><linearGradient id="eg"><stop offset="0" stop-color="#1a9be8"></stop><stop offset=".5" stop-color="#28c8d8"></stop><stop offset="1" stop-color="#5ce06c"></stop></linearGradient></defs>${a.d}</svg></button>`)}
      </div>
      <div class="right">
        <button class="chev" aria-label="Hidden icons"><svg width="12" height="12"><path d="M1 9l5-5 5 5" stroke="#fff" stroke-width="1.500" fill="none"></path></svg></button>
        <svg width="18" height="16"><path d="M1 6c5-5 11-5 16 0M3.500 9c3.500-3.500 7.500-3.500 11 0M6 12c2-2 4-2 6 0" stroke="#fff" stroke-width="1.300" fill="none"></path><circle cx="9" cy="14" r="1.500" fill="#fff"></circle></svg>
        <svg width="18" height="16"><path d="M1 5.500h3l4-4v13l-4-4H1z" fill="none" stroke="#fff"></path><path d="M10.500 5.500c1 1.500 1 3.500 0 5M13 3.500c2 2.500 2 6.500 0 9M15.500 1.500c3 4 3 9 0 13" stroke="#fff" fill="none"></path></svg>
        <svg width="18" height="16"><path d="M3 3.500h11.500v9.500H2.500V8" fill="none" stroke="#fff" stroke-width="1.300"></path><path d="M6 6h7v5.500H4.500zM15 6h2v4h-2z" fill="#fff"></path><path d="M4 0L0 6h3L2 9l4-5H3.500z" fill="#fff"></path></svg>
        <button class="clock"><span>1:14 AM</span><span>4/2/2024</span></button>
        <button class="bell" aria-label="Notifications"><svg width="18" height="18"><path d="M3 13.500V7c0-7.500 12-7.500 12 0v6.500l1.500 1h-15zM7 15c0 2.500 4 2.500 4 0" stroke="#fff" stroke-width="1.300" fill="none"></path></svg></button>
        <button aria-label="Copilot"><svg width="26" height="28"><defs><linearGradient id="c1" x2="0" y2="1"><stop offset="0" stop-color="#1a80f0"></stop><stop offset=".6" stop-color="#30c080"></stop><stop offset="1" stop-color="#f0c020"></stop></linearGradient><linearGradient id="c2" x2="0" y2="1"><stop offset="0" stop-color="#9060f0"></stop><stop offset="1" stop-color="#f06090"></stop></linearGradient></defs><path d="M7 2h9l3 5h-5l-4 12H4c-3 0-4-2-3-5l3-9c.5-2 1.500-3 3-3z" fill="url(#c1)"></path><path d="M17 8h4c3 0 4 2 3 5l-3 8H12z" fill="url(#c2)"></path><rect x="7" y="18" width="18" height="9" rx="2" fill="#ffc800"></rect><text x="16" y="25" font-size="8" font-weight="700" text-anchor="middle" fill="#201800" font-family="Open Sans, sans-serif">PRE</text></svg></button>
      </div>`;
  }
}

/* ---------- application shell ---------- */
type Item = string | null;
const file: Item[] = ["newdoc:New", "open:Open", "openblue:Open sample", "save:Save", null, "print:Print", "preview:Preview", null, "cut:Cut", "copy:Copy", "paste:Paste", null, "undo:Undo", "redo:Redo"];
const views = ["toolboxview:Design Toolbox", "sheetview:Spreadsheet View", "spiceview:Netlist", "grapher:Grapher", "postproc:Postprocessor", "parent:Parent sheet"];
const parts: Item[] = ["source:Source", "resistor:Basic", "diode:Diode", "transistor:Transistor", "opamp:Analog", "ttl:TTL", "cmos:CMOS", "miscdig:Digital", "mixed:Mixed", "indicator:Indicator", "power:Power", "miscpart:Misc", "advperiph:Peripherals", "rf:RF", "motor:Electromechanical", "ni:NI", "connector:Connector", null, "mcu:MCU", null, "hier:Hierarchical block", "bus:Bus"];
const menus: [string, string, string][] = [["", "F", "ile"], ["", "E", "dit"], ["", "V", "iew"], ["", "P", "lace"], ["", "M", "CU"], ["", "S", "imulate"], ["Tra", "n", "sfer"], ["", "T", "ools"], ["", "R", "eports"], ["", "O", "ptions"], ["", "W", "indow"], ["", "H", "elp"]];
const tree: [string, number, boolean][] = [["Lab_Experiment_01_Part-02", 0, false], ["Lab_Experiment_01_Part-02", 1, false], ["Lab_Experiment_01_Part-01", 0, true], ["Lab_Experiment_01_Resistor_Checker", 0, false], ["Lab_Experiment_01_Resistor_Checker", 1, false]];

@customElement("app-root")
export class AppRoot extends LitElement {
  static styles = [ui, css`
    :host { display: flex; flex-direction: column; position: relative; height: 100vh; overflow: hidden; background: #f0f0f0; font-size: 14px; line-height: 18px; }
    .titlebar { display: flex; align-items: center; height: 24px; padding: 0 3px; background: #eff3fb; border-bottom: 1px solid #a0a0a0; }
    .titlebar span { flex: 1; white-space: nowrap; padding-left: 4px; }
    .titlebar button { width: 45px; height: 23px; }
    .menubar { display: flex; align-items: center; height: 30px; padding: 0 4px; gap: 14px; border-top: 1px solid #fff; border-bottom: 1px solid #a0a0a0; }
    .menubar > .ic { margin-right: -6px; }
    .menubar u { text-underline-offset: 2px; }
    .mdi { display: flex; gap: 2px; margin: 8px 0 0 auto; }
    .sq { width: 14px; height: 14px; flex: none; border: 1px solid; border-color: #fff #696969 #696969 #fff; background: #f0f0f0; }
    .row { display: flex; height: 31px; }
    .g { display: flex; align-items: center; height: 31px; padding: 0 3px 0 11px; border: 1px solid; border-color: #fff #a0a0a0 #a0a0a0 #fff; border-left-width: 0; }
    .lower .g { padding-bottom: 2px; }
    .g2 { margin-left: 47px; border-left-width: 1px; padding: 0 3px 0 8px; }
    .g3 { margin: 0 439px 0 auto; border-left-width: 1px; }
    .lower .sim { margin-left: 106px; width: 250px; }
    .probes { margin-left: 8px; }
    .tb { width: 22px; height: 24px; }
    .views .tb { width: 23px; }
    .views { display: flex; }
    .pressed { border: 1px solid; border-color: #a0a0a0 #fff #fff #a0a0a0; background: #f8f8f8; }
    .drop { width: 13px; height: 24px; }
    .sep { width: 8px; height: 25px; border-left: 1px solid #a0a0a0; margin-right: -4px; margin-left: 4px; }
    select { width: 147px; height: 25px; margin-left: 1px; font: 13px "Open Sans", sans-serif; color: #000; background: #fff; border: 1px solid #c8c8c8; border-radius: 2px; padding: 0 2px 0 1px; appearance: none; }
    .combo { display: flex; align-items: center; }
    .combo svg { margin-left: -20px; margin-right: 9px; pointer-events: none; }
    .run { gap: 2px; margin: 0 0 2px 3px; }

    .main { flex: 1; min-height: 0; display: grid; grid-template-columns: 209px minmax(0, 1fr) 26px; }
    .dock { display: flex; flex-direction: column; min-height: 0; min-width: 0; border-top: 1px solid #fff; border-bottom: 1px solid #a0a0a0; margin-bottom: 4px; }
    .dockhead { display: flex; align-items: center; gap: 2px; margin: 3px 10px 3px 3px; height: 25px; }
    .dockhead h2 { flex: 1; height: 25px; margin: 0 1px 0 0; padding-left: 3px; font-weight: 400; font-size: 15px; line-height: 22px; background: linear-gradient(90deg, #c2cfdd, #d6e3f0); }
    .panel { flex: 1; min-height: 0; display: flex; flex-direction: column; margin: 0 10px 0 4px; padding: 0 2px 1px 0; border: 1px solid; border-color: #fff #696969 #696969 #fff; }
    .ptools { display: flex; align-items: center; height: 27px; padding: 0 3px; }
    .ptools button { width: 26px; }
    .ptools button:first-child { width: 18px; margin-right: 4px; }
    .ptools button:last-child { width: 18px; margin: 0 0 0 auto; }
    .tree { flex: 1; min-height: 0; border: 1px solid #828790; background: #fff; overflow: hidden; display: flex; flex-direction: column; }
    ul { list-style: none; margin: 0; padding: 1px 0 0; flex: 1; overflow: hidden; }
    li { white-space: nowrap; height: 18px; display: flex; margin-left: -15px; }
    li.in { margin-left: 3px; }
    .sel { background: #0078d7; color: #fff; outline: 1px dotted #ff8728; outline-offset: -1px; padding-right: 2px; }
    .hs { display: flex; align-items: center; height: 17px; background: #f0f0f0; padding: 0 49px 0 47px; }
    .bar { background: #858585; height: 2px; flex: 1; }
    .tabs { display: flex; align-items: flex-start; gap: 2px; padding-left: 4px; font-family: Roboto, sans-serif; font-size: 11px; line-height: 18px; height: 24px; }
    .tabs button { height: 19px; padding: 0 5px 1px 4px; border: 1px solid; border-color: #696969 #696969 #696969 #fff; border-right-width: 2px; border-bottom-width: 2px; }
    .tabs button.on { height: 21px; border-top-color: #f0f0f0; padding: 2px 5px 0; border-right-width: 1px; margin-right: -1px; border-bottom-width: 1px; }

    .docs { display: flex; flex-direction: column; min-width: 0; min-height: 0; }
    .frame { flex: 1; min-height: 0; border: 1px solid #696969; padding: 3px 3px 5px 4px; display: flex; }
    .well { flex: 1; min-width: 0; display: grid; grid-template: minmax(0, 1fr) 16px / minmax(0, 1fr) 16px; border: 2px solid; border-color: #696969 #fff #fff #696969; }
    .vs { padding-top: 17px; display: flex; justify-content: center; }
    .vs i { width: 2px; height: 53%; background: #858585; }
    .dh { padding: 7px 19px 0 41px; display: flex; }
    .doctabs { display: flex; align-items: flex-start; height: 30px; padding-left: 3px; }
    .doctabs button { height: 24px; gap: 4px; padding: 0 4px 0 3px; border: 1px solid #696969; border-top-color: #f0f0f0; border-left-color: #fff; border-bottom: 1px solid #000; white-space: nowrap; }
    .doctabs button.on { height: 26px; padding-top: 1px; }
    .doctabs .sq { margin: 6px 4px 0 auto; height: 15px; padding: 0; border: 1px solid; border-color: #fff #696969 #696969 #fff; }

    .rail { border-top: 1px solid #fff; border-bottom: 1px solid #a0a0a0; margin-bottom: 4px; }
    .inst { display: flex; flex-direction: column; align-items: center; padding: 12px 0 5px; border-right: 1px solid #a0a0a0; border-bottom: 1px solid #a0a0a0; }
    .inst button { height: 21px; }
    .inst .arrow { height: 10px; }
    .inst hr { width: 21px; height: 1px; margin: 5px 0 3px; border: 0; background: #a0a0a0; }

    .sheet { display: flex; height: 146px; border-top: 1px solid #696969; padding: 3px 5px 0 1px; }
    .side { display: flex; flex-direction: column; align-items: center; width: 26px; gap: 2px; }
    .side h2 { writing-mode: vertical-rl; transform: rotate(180deg); margin: 0; width: 25px; height: 105px; overflow: hidden; font-weight: 400; font-size: 14px; line-height: 17px; padding: 3px 0 0 8px; white-space: nowrap; background: linear-gradient(0deg, #d6e3f0, #bfccda); }
    .out { flex: 1; display: flex; flex-direction: column; min-width: 0; margin-left: 4px; }
    .outbox { height: 114px; margin-top: 2px; padding: 1px 3px 3px 0; border: 1px solid; border-color: #fff #696969 #696969 #fff; }
    .log { height: 100%; border: 1px solid #828790; background: #fff; padding: 4px 23px; white-space: pre; }
    .out .tabs { padding-left: 0; }

    .status { display: flex; align-items: center; height: 24px; border-top: 1px solid #a0a0a0; box-shadow: inset 0 1px #fff; padding: 3px 0 0 2px; }
    .status > span { flex: 1; }
    .cell { height: 20px; border-left: 1px solid #d4d4d4; width: 183px; padding-left: 4px; }
    .meterbox { display: flex; gap: 2px; width: 65px; height: 20px; border-left: 1px solid #d4d4d4; padding: 3px 0 0 4px; }
    .meterbox i { width: 6px; height: 13px; border: 1px solid; border-color: #a0a0a0 #fff #fff #a0a0a0; background: #e8e8e8; }
    .dash { margin-right: 143px; }
    .float { position: absolute; top: 740px; left: 346px; }
    .float.second { left: 543px; }
  `];

  private btn(item: Item, cls = "tb") {
    if (item === null) return html`<i class="sep"></i>`;
    const [name, label] = item.split(":");
    return html`<button class=${cls} title=${label} aria-label=${label}>${icon(name)}</button>`;
  }
  private down() {
    return html`<button class="drop" aria-label="More"><svg width="5" height="3"><path d="M0 0h5L2.500 3z"></path></svg></button>`;
  }
  private x(c = "#000") { return html`<svg width="8" height="8"><path d="M1 1l6 6M7 1L1 7" stroke=${c} stroke-width="2"></path></svg>`; }

  render() {
    return html`
      <header class="titlebar">
        <svg width="16" height="16" viewBox="0 0 16 16"><path d="M0 0h16v16H0z" fill="#4a4580"></path><path d="M0 0h16v5H0z" fill="#8a84b4"></path><path d="M1 4.500h8v2h6M1 10.500h5v-3h4M4.500 15v-2.500h5v3M12.500 15v-5h3" stroke="#b8b2d8" fill="none"></path></svg>
        <span>Lab_Experiment_01_Part-01 - Multisim - [Lab_Experiment_01_Part-01]</span>
        <button aria-label="Minimize"><svg width="10" height="10"><path d="M0 5.500h10" stroke="#000"></path></svg></button>
        <button aria-label="Restore"><svg width="11" height="11"><path d="M.5 3.500q0-1 1-1h5q1 0 1 1v6q0 1-1 1h-5q-1 0-1-1zM2.500 2.500q0-2 2-2h3.500q2 0 2 2v5q0 1-1.500 1.500" fill="none" stroke="#000"></path></svg></button>
        <button aria-label="Close"><svg width="11" height="11"><path d="M.5.5l10 10M10.500.5l-10 10" stroke="#000"></path></svg></button>
      </header>
      <nav class="menubar">${icon("sheet")}
        ${menus.map(([a, u, b]) => html`<button><span>${a}<u>${u}</u>${b}</span></button>`)}
        <div class="mdi">
          <button class="sq" aria-label="Minimize sheet"><svg width="8" height="8"><path d="M0 7h6" stroke="#000" stroke-width="2"></path></svg></button>
          <button class="sq" aria-label="Restore sheet"><svg width="10" height="10"><path d="M3.500 4V1.500h6v4H7M3 1.500h7M.5 4.500h6v4h-6zM0 4.500h7" stroke="#000" fill="none"></path></svg></button>
          <button class="sq" aria-label="Close sheet">${this.x()}</button>
        </div>
      </nav>
      <div class="row">
        <div class="g">${file.map((i) => this.btn(i))}</div>
        <div class="g g2">
          <div class="views">${views.map((i, n) => this.btn(i, n < 2 ? "tb pressed" : "tb"))}</div>
          <i class="sep"></i>${this.btn("wizard:Component wizard")}${this.btn("database:Database manager")}
          <label class="combo"><select aria-label="In-use list"><option>--- In-Use List ---</option></select>
            <svg width="10" height="6"><path d="M1 1l4 4 4-4" stroke="#707070" fill="none"></path></svg></label>
          <i class="sep"></i>${this.btn("erc:Rules check")}${this.btn("fwdanno:Transfer")}${this.down()}${this.btn("backanno:Back annotate")}${this.btn("fwdanno2:Forward annotate")}${this.down()}
          <i class="sep"></i>${this.btn("find:Find examples")}${this.btn("help:Help")}
        </div>
        <div class="g g3">${["zoomin:Zoom in", "zoomout:Zoom out", "zoomarea:Zoom area", "zoomfit:Zoom sheet", "fullscreen:Full screen"].map((i) => this.btn(i))}</div>
      </div>
      <div class="row lower">
        <div class="g">${parts.map((i) => this.btn(i))}</div>
        <div class="g sim">${this.btn("play:Run")}${this.btn("pause:Pause")}${this.btn("stop:Stop", "tb pressed")}
          <button class="run">${icon("wrench", 14)}<span>Interactive</span></button></div>
        <div class="g probes">${["pv:Voltage", "pa:Current", "pw:Power", "pdiff:Differential", "pva:Voltage and current", "pref:Reference", "pdig:Digital", "psettings:Probe settings"].map((i) => this.btn(i))}</div>
      </div>
      <main class="main">
        <aside class="dock">
          <div class="dockhead"><h2>Design Toolbox</h2>
            <button class="sq" aria-label="Collapse"><svg width="6" height="3"><path d="M0 3L3 0l3 3z" fill="#909090"></path></svg></button>
            <button class="sq" aria-label="Close toolbox">${this.x()}</button></div>
          <div class="panel">
            <div class="ptools">${["newyellow:New design", "open:Open design", "save:Save design", "closeproj:Close design", "rename:Rename", "versions:Versions"].map((i) => this.btn(i, ""))}</div>
            <div class="tree">
              <ul>${tree.map(([t, lvl, sel]) => html`<li class=${classMap({ in: lvl === 1 })}><span class=${classMap({ sel })}>${t}</span></li>`)}</ul>
              <div class="hs"><i class="bar"></i></div>
            </div>
          </div>
          <div class="tabs"><button class="on">Hierarchy</button><button>Visibility</button><button>Project View</button></div>
        </aside>
        <section class="docs">
          <div class="frame"><div class="well">
            <schematic-sheet></schematic-sheet>
            <div class="vs"><i></i></div>
            <div class="dh"><i class="bar"></i></div>
          </div></div>
          <div class="doctabs">
            <button>${icon("sheet")}Lab_Experiment_01_Part-02</button>
            <button class="on">${icon("sheet")}Lab_Experiment_01_Part-01</button>
            <button>${icon("sheet")}Lab_Experiment_01_Resistor_Checker</button>
            <button class="sq" aria-label="Cascade">${icon("cascade", 12)}</button>
          </div>
        </section>
        <aside class="rail"><div class="inst">
          ${instruments.map(([n, d]) => html`<button title=${n} aria-label=${n}><svg width="16" height="16" viewBox="0 0 16 16" shape-rendering="crispEdges">${d}</svg></button>`)}
          <hr />${this.btn("component:LabVIEW instruments", "")}
          <button class="arrow" aria-label="More instruments"><svg width="4" height="6"><path d="M0 0l4 3-4 3z"></path></svg></button>
          <hr />${this.btn("tester:NI ELVISmx", "")}
          <button class="arrow" aria-label="More devices"><svg width="4" height="6"><path d="M0 0l4 3-4 3z" fill="#a0a0a0"></path></svg></button>
          <hr />${this.btn("probeclamp:Current clamp", "")}
        </div></aside>
      </main>
      <section class="sheet">
        <div class="side">
          <button class="sq" aria-label="Close spreadsheet">${this.x()}</button>
          <button class="sq" aria-label="Expand"><svg width="3" height="6"><path d="M0 0l3 3-3 3z" fill="#909090"></path></svg></button>
          <h2>Spreadsheet View</h2>
        </div>
        <div class="out">
          <div class="outbox"><div class="log" tabindex="0">Multisim  -  Tuesday, April 2, 2024, 1:05:24 AM</div></div>
          <div class="tabs"><button class="on">Results</button><button>Nets&nbsp;&nbsp;&nbsp;</button><button>Components</button><button>Copper layers</button><button>Simulation</button></div>
        </div>
      </section>
      <footer class="status"><span>For Help, press F1</span><div class="dash">-</div><div class="cell"></div><div class="cell">Tran: 0.900 s</div>
        <div class="meterbox">${[1, 2, 3, 4, 5, 6, 7].map(() => html`<i></i>`)}</div></footer>
      <task-bar></task-bar>
      <multimeter-window class="float" name="XMM1" reading="4 V"></multimeter-window>
      <multimeter-window class="float second" name="XMM2" reading="6 V"></multimeter-window>
    `;
  }
}
